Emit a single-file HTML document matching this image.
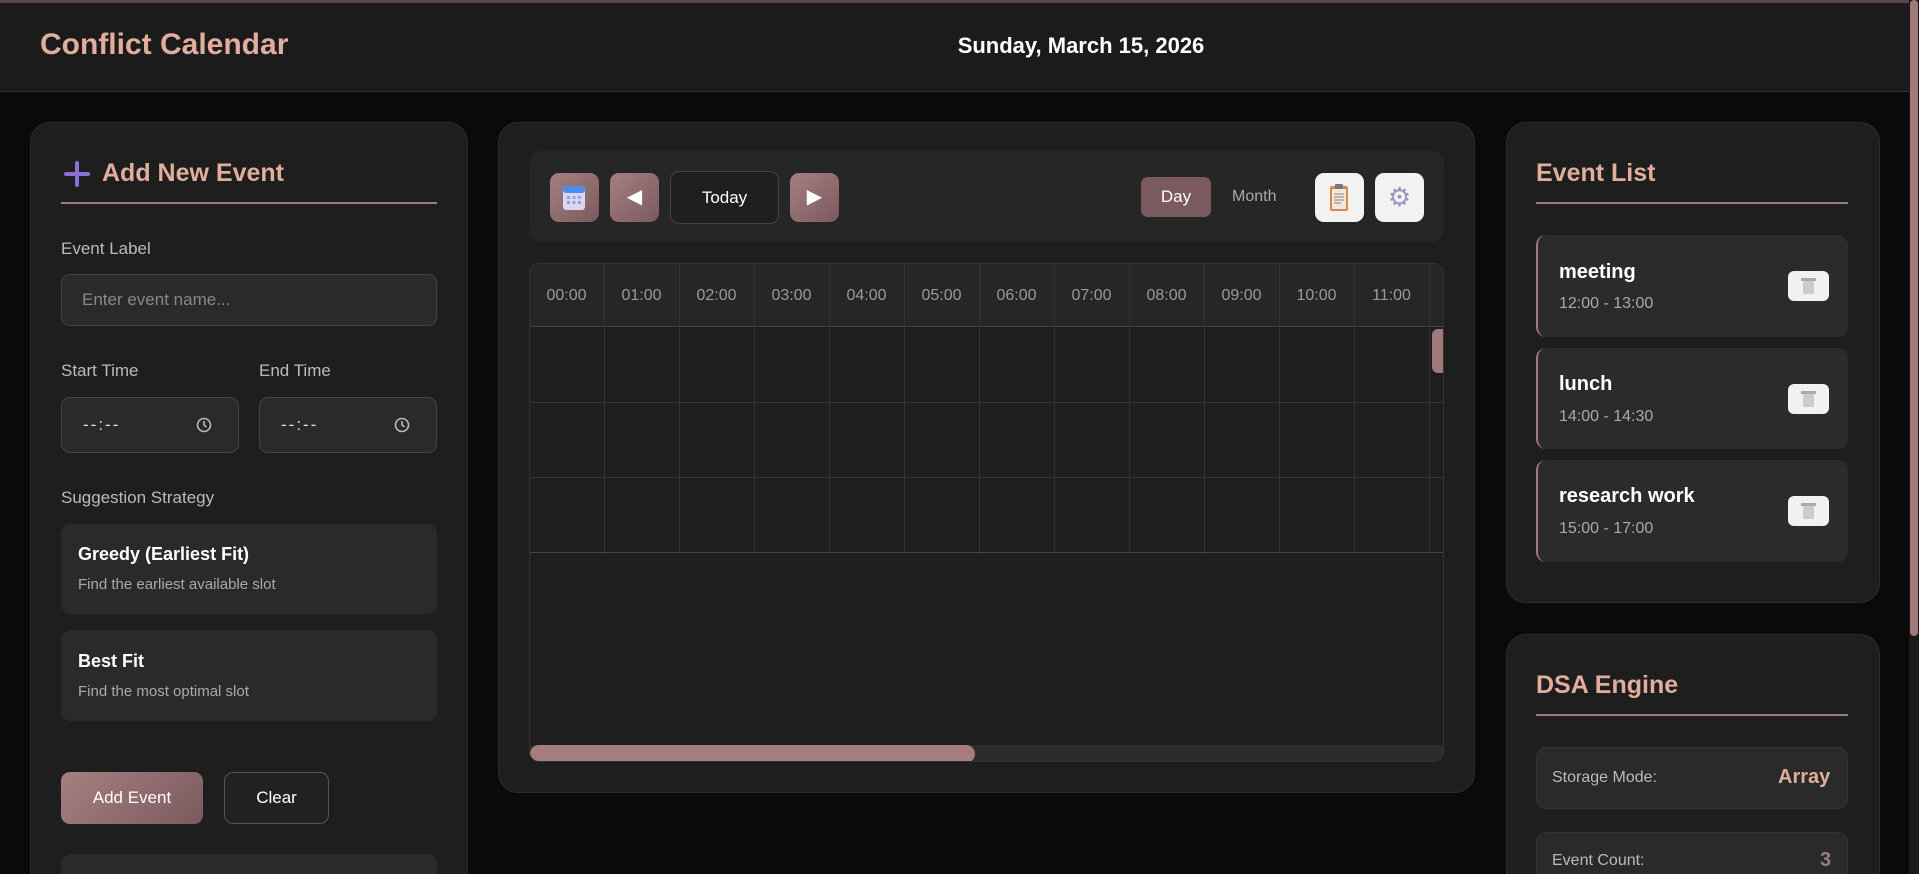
<!DOCTYPE html>
<html><head><meta charset="utf-8"><style>
*{box-sizing:border-box;margin:0;padding:0}
html,body{width:1919px;height:874px;overflow:hidden}
body{background:#0a0a0a;font-family:"Liberation Sans",sans-serif;color:#fff}
#wrap{position:relative;width:1919px;height:874px;overflow:hidden}
.abs{position:absolute}
.hdr{left:0;top:0;width:1909px;height:92px;background:#1b1b1b;border-top:3px solid #5a4650;border-bottom:1px solid #333}
.title{left:40px;top:28px;font-size:30px;font-weight:600;color:#e2ae9c}
.date{left:0;width:2162px;text-align:center;top:33px;font-size:22px;font-weight:600;color:#fff}
.panel{background:#1e1e1e;border:1px solid #2c2c2c;border-radius:20px}
.open{border-bottom:none;border-bottom-left-radius:0;border-bottom-right-radius:0}
.h2{font-size:25px;font-weight:600;color:#e2ae9c}
.ul{height:2px;background:#a07a7a}
.lbl{font-size:17px;color:#bbb}
.inp{background:#2a2a2a;border:1px solid #444;border-radius:9px}
.card{background:#2a2a2a;border-radius:10px}
.btnp{background:linear-gradient(135deg,#a77f80,#7a5a5e);border-radius:9px}
.col{position:absolute;top:0;width:75px;height:290px;border-right:1px solid #333}
.hh{position:absolute;top:0;width:75px;height:63px;text-align:center;line-height:63px;font-size:16px;color:#9a9a9a}
.ev{background:#2b2b2b;border-left:2px solid #a07a7a;border-radius:10px}
.tr{background:#f1f1f1;border-radius:6px;width:41px;height:30px}
.tr svg{position:absolute;left:13px;top:6px}
</style></head><body><div id="wrap">
<div class="abs hdr"></div>
<div class="abs title">Conflict Calendar</div>
<div class="abs date">Sunday, March 15, 2026</div>
<div class="abs" style="left:1909px;top:0;width:10px;height:874px;background:#1a1a1a"></div>
<div class="abs" style="left:1910px;top:0;width:8px;height:636px;background:#a07a7a;border-radius:4px"></div>

<div class="abs panel open" style="left:30px;top:122px;width:438px;height:752px"></div>
<svg class="abs" style="left:64px;top:161px" width="26" height="26"><path d="M13 2v22M2 13h22" stroke="#8e6fd6" stroke-width="4" stroke-linecap="round"/></svg>
<div class="abs h2" style="left:102px;top:159px">Add New Event</div>
<div class="abs ul" style="left:61px;top:202px;width:376px"></div>
<div class="abs lbl" style="left:61px;top:239px">Event Label</div>
<div class="abs inp" style="left:61px;top:274px;width:376px;height:52px"></div>
<div class="abs" style="left:82px;top:290px;font-size:17px;color:#888">Enter event name...</div>
<div class="abs lbl" style="left:61px;top:361px">Start Time</div>
<div class="abs lbl" style="left:259px;top:361px">End Time</div>
<div class="abs inp" style="left:61px;top:397px;width:178px;height:56px"></div>
<div class="abs inp" style="left:259px;top:397px;width:178px;height:56px"></div>
<div class="abs" style="left:83px;top:415px;font-size:17px;color:#ddd;letter-spacing:2px">--:--</div>
<div class="abs" style="left:281px;top:415px;font-size:17px;color:#ddd;letter-spacing:2px">--:--</div>
<svg class="abs" style="left:196px;top:417px" width="16" height="16"><circle cx="8" cy="8" r="6.5" fill="none" stroke="#bbb" stroke-width="1.6"/><path d="M8 4v4l2.5 2" stroke="#bbb" stroke-width="1.6" fill="none"/></svg>
<svg class="abs" style="left:394px;top:417px" width="16" height="16"><circle cx="8" cy="8" r="6.5" fill="none" stroke="#bbb" stroke-width="1.6"/><path d="M8 4v4l2.5 2" stroke="#bbb" stroke-width="1.6" fill="none"/></svg>
<div class="abs lbl" style="left:61px;top:488px">Suggestion Strategy</div>
<div class="abs card" style="left:61px;top:524px;width:376px;height:90px"></div>
<div class="abs" style="left:78px;top:544px;font-size:18px;font-weight:700">Greedy (Earliest Fit)</div>
<div class="abs" style="left:78px;top:576px;font-size:15px;color:#aaa">Find the earliest available slot</div>
<div class="abs card" style="left:61px;top:630px;width:376px;height:91px"></div>
<div class="abs" style="left:78px;top:651px;font-size:18px;font-weight:700">Best Fit</div>
<div class="abs" style="left:78px;top:683px;font-size:15px;color:#aaa">Find the most optimal slot</div>
<div class="abs btnp" style="left:61px;top:772px;width:142px;height:52px;text-align:center;line-height:52px;font-size:17px">Add Event</div>
<div class="abs" style="left:224px;top:772px;width:105px;height:52px;border:1px solid #555;border-radius:9px;background:#222;text-align:center;line-height:50px;font-size:17px">Clear</div>
<div class="abs card" style="left:61px;top:854px;width:376px;height:20px;border-bottom-left-radius:0;border-bottom-right-radius:0"></div>

<div class="abs panel" style="left:498px;top:122px;width:977px;height:671px"></div>
<div class="abs" style="left:529px;top:151px;width:915px;height:91px;background:#262626;border-radius:12px"></div>
<div class="abs btnp" style="left:550px;top:173px;width:49px;height:49px"></div>
<svg class="abs" style="left:562px;top:184px" width="24" height="27"><rect x="1" y="2" width="22" height="24" rx="3" fill="#dcd6f4"/><rect x="1" y="2" width="22" height="7" rx="3" fill="#4a8cf0"/><g fill="#9aa0d8"><rect x="5" y="12" width="3" height="3"/><rect x="10.5" y="12" width="3" height="3"/><rect x="16" y="12" width="3" height="3"/><rect x="5" y="17" width="3" height="3"/><rect x="10.5" y="17" width="3" height="3"/><rect x="16" y="17" width="3" height="3"/></g></svg>
<div class="abs btnp" style="left:610px;top:173px;width:49px;height:49px;color:#fff;text-align:center;line-height:49px;font-size:20px">◀</div>
<div class="abs" style="left:670px;top:171px;width:109px;height:53px;border:1px solid #444;border-radius:9px;background:#1f1f1f;text-align:center;line-height:51px;font-size:17px">Today</div>
<div class="abs btnp" style="left:790px;top:173px;width:49px;height:49px;color:#fff;text-align:center;line-height:49px;font-size:20px">▶</div>
<div class="abs" style="left:1141px;top:177px;width:70px;height:40px;background:#7a5a5e;border-radius:7px;text-align:center;line-height:40px;font-size:17px">Day</div>
<div class="abs" style="left:1232px;top:177px;width:46px;height:40px;line-height:40px;font-size:16px;color:#aaa">Month</div>
<div class="abs" style="left:1315px;top:173px;width:49px;height:49px;background:#f2f2f2;border-radius:9px"></div>
<svg class="abs" style="left:1328px;top:183px" width="22" height="29"><rect x="2" y="3" width="18" height="25" rx="2" fill="#d8884c"/><rect x="4" y="6" width="14" height="20" fill="#f4e6d8"/><rect x="7" y="1" width="8" height="5" rx="1" fill="#777"/><g stroke="#999" stroke-width="1.2"><path d="M6 11h10M6 14h10M6 17h10M6 20h7"/></g></svg>
<div class="abs" style="left:1375px;top:173px;width:49px;height:49px;background:#f2f2f2;border-radius:9px;text-align:center;line-height:49px;font-size:26px;color:#9a94c0">⚙</div>

<div class="abs" style="left:529px;top:263px;width:915px;height:499px;border:1px solid #333;border-radius:10px;background:#1e1e1e;overflow:hidden">
 <div class="abs" style="left:0;top:0;width:915px;height:63px;background:#262626;border-bottom:1px solid #444"></div>
 <div class="abs" style="left:0;top:138px;width:915px;height:1px;background:#333"></div>
 <div class="abs" style="left:0;top:213px;width:915px;height:1px;background:#333"></div>
 <div class="abs" style="left:0;top:288px;width:915px;height:1px;background:#444"></div>
 <div class="col" style="left:0"></div><div class="col" style="left:75px"></div><div class="col" style="left:150px"></div><div class="col" style="left:225px"></div><div class="col" style="left:300px"></div><div class="col" style="left:375px"></div><div class="col" style="left:450px"></div><div class="col" style="left:525px"></div><div class="col" style="left:600px"></div><div class="col" style="left:675px"></div><div class="col" style="left:750px"></div><div class="col" style="left:825px"></div>
 <div class="hh" style="left:-1px">00:00</div><div class="hh" style="left:74px">01:00</div><div class="hh" style="left:149px">02:00</div><div class="hh" style="left:224px">03:00</div><div class="hh" style="left:299px">04:00</div><div class="hh" style="left:374px">05:00</div><div class="hh" style="left:449px">06:00</div><div class="hh" style="left:524px">07:00</div><div class="hh" style="left:599px">08:00</div><div class="hh" style="left:674px">09:00</div><div class="hh" style="left:749px">10:00</div><div class="hh" style="left:824px">11:00</div>
 <div class="abs" style="left:902px;top:65px;width:20px;height:44px;background:#a07a7a;border-radius:6px"></div>
 <div class="abs" style="left:0;top:481px;width:915px;height:18px;background:#2c2c2c"></div>
 <div class="abs" style="left:0;top:481px;width:445px;height:18px;background:#a77c7c;border-radius:9px"></div>
</div>

<div class="abs panel" style="left:1506px;top:122px;width:374px;height:481px"></div>
<div class="abs h2" style="left:1536px;top:159px">Event List</div>
<div class="abs ul" style="left:1536px;top:202px;width:312px"></div>
<div class="abs ev" style="left:1536px;top:235px;width:312px;height:102px"></div>
<div class="abs" style="left:1559px;top:261px;font-size:20px;font-weight:600">meeting</div>
<div class="abs" style="left:1559px;top:295px;font-size:16px;color:#aaa">12:00 - 13:00</div>
<div class="abs tr" style="left:1788px;top:271px"><svg width="15" height="18"><rect x="2" y="4" width="11" height="13" rx="1" fill="#ccc"/><rect x="0" y="1" width="15" height="3" fill="#aaa"/></svg></div>
<div class="abs ev" style="left:1536px;top:348px;width:312px;height:101px"></div>
<div class="abs" style="left:1559px;top:373px;font-size:20px;font-weight:600">lunch</div>
<div class="abs" style="left:1559px;top:408px;font-size:16px;color:#aaa">14:00 - 14:30</div>
<div class="abs tr" style="left:1788px;top:384px"><svg width="15" height="18"><rect x="2" y="4" width="11" height="13" rx="1" fill="#ccc"/><rect x="0" y="1" width="15" height="3" fill="#aaa"/></svg></div>
<div class="abs ev" style="left:1536px;top:460px;width:312px;height:102px"></div>
<div class="abs" style="left:1559px;top:485px;font-size:20px;font-weight:600">research work</div>
<div class="abs" style="left:1559px;top:520px;font-size:16px;color:#aaa">15:00 - 17:00</div>
<div class="abs tr" style="left:1788px;top:496px"><svg width="15" height="18"><rect x="2" y="4" width="11" height="13" rx="1" fill="#ccc"/><rect x="0" y="1" width="15" height="3" fill="#aaa"/></svg></div>

<div class="abs panel open" style="left:1506px;top:634px;width:374px;height:240px"></div>
<div class="abs h2" style="left:1536px;top:671px">DSA Engine</div>
<div class="abs ul" style="left:1536px;top:714px;width:312px"></div>
<div class="abs card" style="left:1536px;top:747px;width:312px;height:62px;border:1px solid #333"></div>
<div class="abs" style="left:1552px;top:769px;font-size:16px;color:#bbb">Storage Mode:</div>
<div class="abs" style="left:1778px;top:766px;font-size:20px;font-weight:700;color:#e2ae9c">Array</div>
<div class="abs card" style="left:1536px;top:832px;width:312px;height:42px;border:1px solid #333;border-bottom:none;border-bottom-left-radius:0;border-bottom-right-radius:0"></div>
<div class="abs" style="left:1552px;top:852px;font-size:16px;color:#bbb">Event Count:</div>
<div class="abs" style="left:1820px;top:849px;font-size:20px;font-weight:700;color:#a07a7a">3</div>
</div></body></html>
